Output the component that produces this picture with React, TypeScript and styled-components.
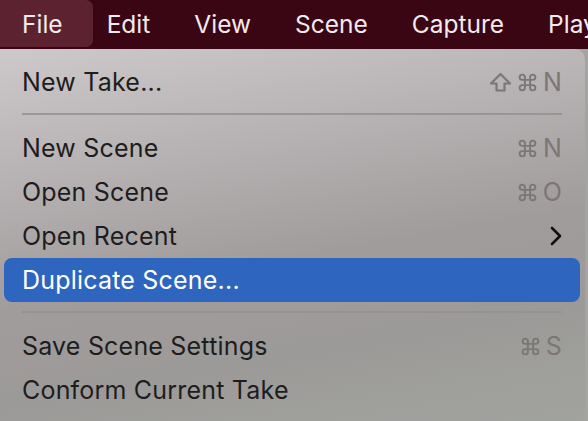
import React from "react";
import styled, { createGlobalStyle } from "styled-components";
import { Command } from "lucide-react";

const GlobalStyle = createGlobalStyle`
  html, body {
    margin: 0;
    padding: 0;
    width: 588px;
    height: 421px;
    overflow: hidden;
    background: #a3a3a0;
  }
  body {
    font-family: Inter, "Noto Sans", "DejaVu Sans", sans-serif;
  }
`;

const Screen = styled.div`
  width: 588px;
  height: 421px;
  display: flex;
  flex-direction: column;
  background: #a4a5a2;
`;

const MenuBar = styled.div`
  height: 49px;
  flex-shrink: 0;
  display: flex;
  align-items: flex-start;
  background: #3a0613;
  overflow: hidden;
  white-space: nowrap;
`;

const MenuTitle = styled.div<{ $active?: boolean }>`
  height: 47px;
  display: flex;
  align-items: center;
  padding: ${(p) => (p.$active ? "0 30px" : "0 22px")};
  margin: ${(p) => (p.$active ? "0 -8px" : "0")};
  border-radius: 7px;
  background: ${(p) => (p.$active ? "#5c2230" : "transparent")};
  color: #f2eaec;
  font-size: 24.5px;
`;

const Panel = styled.div`
  width: 585px;
  flex: 1;
  padding: 11px 5px 0 4px;
  box-sizing: border-box;
  border-top-right-radius: 10px;
  background:
    linear-gradient(170deg, #cdc8c9 0%, #b9b4b5 25%, #a19c9c 55%, #9c9a98 75%, #a1a39f 100%);
`;

const Row = styled.div<{ $highlight?: boolean }>`
  height: 44px;
  display: flex;
  align-items: center;
  justify-content: space-between;
  padding: 0 18px;
  border-radius: 8px;
  background: ${(p) => (p.$highlight ? "#2e65bf" : "transparent")};
  color: ${(p) => (p.$highlight ? "#ffffff" : "#1e1d1d")};
  font-size: 25px;
  letter-spacing: 0.2px;
`;

const Label = styled.span`
  white-space: nowrap;
`;

const Shortcut = styled.span`
  display: flex;
  align-items: center;
  gap: 5px;
  color: #7b7777;
  font-size: 25px;

  svg {
    display: block;
  }
`;

const ShiftIcon = () => (
  <svg width="23" height="20" viewBox="0 0 23 20">
    <polygon
      points="11.5,2 21,11.5 15.5,11.5 15.5,18.5 7.5,18.5 7.5,11.5 2,11.5"
      fill="none"
      stroke="#7b7777"
      strokeWidth="2.2"
      strokeLinejoin="round"
    />
  </svg>
);

const Cmd = () => <Command size={21} strokeWidth={2.2} color="#7b7777" />;

const Separator = styled.div`
  height: 2px;
  margin: 9px 18px 11px 18px;
  background: #959191;
  opacity: 0.85;
`;

const Chevron = () => (
  <svg width="12" height="20" viewBox="0 0 12 20">
    <polyline
      points="2,2 10,10 2,18"
      fill="none"
      stroke="#111"
      strokeWidth="2.6"
      strokeLinecap="round"
      strokeLinejoin="round"
    />
  </svg>
);

const titles = ["File", "Edit", "View", "Scene", "Capture", "Playback"];

export default function App() {
  return (
    <>
      <GlobalStyle />
      <Screen>
        <MenuBar>
          {titles.map((t, i) => (
            <MenuTitle key={t} $active={i === 0}>
              {t}
            </MenuTitle>
          ))}
        </MenuBar>
        <Panel>
          <Row>
            <Label>New Take...</Label>
            <Shortcut>
              <ShiftIcon />
              <Cmd />N
            </Shortcut>
          </Row>
          <Separator />
          <Row>
            <Label>New Scene</Label>
            <Shortcut>
              <Cmd />N
            </Shortcut>
          </Row>
          <Row>
            <Label>Open Scene</Label>
            <Shortcut>
              <Cmd />O
            </Shortcut>
          </Row>
          <Row>
            <Label>Open Recent</Label>
            <Chevron />
          </Row>
          <Row $highlight>
            <Label>Duplicate Scene...</Label>
          </Row>
          <Separator />
          <Row>
            <Label>Save Scene Settings</Label>
            <Shortcut>
              <Cmd />S
            </Shortcut>
          </Row>
          <Row>
            <Label>Conform Current Take</Label>
          </Row>
        </Panel>
      </Screen>
    </>
  );
}
